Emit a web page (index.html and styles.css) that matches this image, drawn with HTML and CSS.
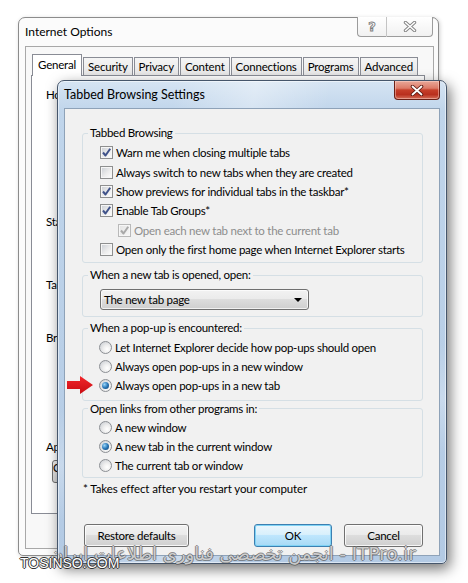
FILE: index.html
```html
<!DOCTYPE html>
<html lang="en">
<head>
    <meta charset="UTF-8">
    <meta name="viewport" content="width=device-width, initial-scale=1.0">
    <title>Tabbed Browsing Settings</title>
    <link rel="stylesheet" href="styles.css">
</head>
<body>
    <!-- Internet Options window, behind -->
    <div class="iewin">
        <div class="iewin-title">
            <span class="iewin-name">Internet Options</span>
            <div class="caption">
                <span class="cap-btn cap-help">?</span>
                <span class="cap-btn cap-close">
                    <svg width="14" height="11" viewBox="0 0 14 11">
                        <path d="M2.5 1.5 L11.5 9.5 M11.5 1.5 L2.5 9.5" stroke="#858585" stroke-width="3.4" stroke-linecap="round"/>
                        <path d="M2.5 1.5 L11.5 9.5 M11.5 1.5 L2.5 9.5" stroke="#fff" stroke-width="1.5" stroke-linecap="round"/>
                    </svg>
                </span>
            </div>
        </div>
        <div class="sheet">
            <div class="tabs">
                <span class="tab active">General</span>
                <span class="tab">Security</span>
                <span class="tab">Privacy</span>
                <span class="tab">Content</span>
                <span class="tab">Connections</span>
                <span class="tab">Programs</span>
                <span class="tab">Advanced</span>
            </div>
            <div class="tabpage">
                <div class="sec sec-home">Home page</div>
                <div class="sec sec-startup">Startup</div>
                <div class="sec sec-tabs">Tabs</div>
                <div class="sec sec-history">Browsing history</div>
                <div class="sec sec-look">Appearance</div>
                <span class="old-btn">Colors</span>
            </div>
        </div>
    </div>

    <!-- Tabbed Browsing Settings dialog, in front -->
    <div class="dlg">
        <div class="dlg-title">
            <span class="dlg-name">Tabbed Browsing Settings</span>
            <span class="dlg-close">
                <svg width="14" height="11" viewBox="0 0 14 11">
                    <path d="M2.5 1.5 L11.5 9.5 M11.5 1.5 L2.5 9.5" stroke="#5a1a12" stroke-width="3.6" stroke-linecap="round"/>
                    <path d="M2.5 1.5 L11.5 9.5 M11.5 1.5 L2.5 9.5" stroke="#fff" stroke-width="1.8" stroke-linecap="round"/>
                </svg>
            </span>
        </div>
        <div class="client">
            <fieldset class="group g-tabbed">
                <legend>Tabbed Browsing</legend>
                <label class="row"><span class="cb on"><svg viewBox="0 0 11 11"><path d="M2 5.5 L4.5 8.5 L9.2 1.8"/></svg></span>Warn me when closing multiple tabs</label>
                <label class="row"><span class="cb"></span>Always switch to new tabs when they are created</label>
                <label class="row"><span class="cb on"><svg viewBox="0 0 11 11"><path d="M2 5.5 L4.5 8.5 L9.2 1.8"/></svg></span>Show previews for individual tabs in the taskbar*</label>
                <label class="row"><span class="cb on"><svg viewBox="0 0 11 11"><path d="M2 5.5 L4.5 8.5 L9.2 1.8"/></svg></span>Enable Tab Groups*</label>
                <label class="row sub disabled"><span class="cb on"><svg viewBox="0 0 11 11"><path d="M2 5.5 L4.5 8.5 L9.2 1.8"/></svg></span>Open each new tab next to the current tab</label>
                <label class="row"><span class="cb"></span>Open only the first home page when Internet Explorer starts</label>
            </fieldset>

            <fieldset class="group g-newtab">
                <legend>When a new tab is opened, open:</legend>
                <div class="select">
                    <span>The new tab page</span>
                    <span class="caret"></span>
                </div>
            </fieldset>

            <fieldset class="group g-popup">
                <legend>When a pop-up is encountered:</legend>
                <label class="row"><span class="rb"></span>Let Internet Explorer decide how pop-ups should open</label>
                <label class="row"><span class="rb"></span>Always open pop-ups in a new window</label>
                <label class="row"><span class="rb on"></span>Always open pop-ups in a new tab</label>
            </fieldset>

            <fieldset class="group g-links">
                <legend>Open links from other programs in:</legend>
                <label class="row"><span class="rb"></span>A new window</label>
                <label class="row"><span class="rb on"></span>A new tab in the current window</label>
                <label class="row"><span class="rb"></span>The current tab or window</label>
            </fieldset>

            <p class="note">* Takes effect after you restart your computer</p>

            <div class="buttons">
                <button class="btn btn-restore">Restore defaults</button>
                <span class="spacer"></span>
                <button class="btn btn-ok">OK</button>
                <button class="btn btn-cancel">Cancel</button>
            </div>
        </div>
    </div>

    <!-- annotation arrow -->
    <svg class="arrow" width="27" height="20" viewBox="0 0 27 20">
        <defs>
            <linearGradient id="arrowFill" x1="0" y1="0" x2="0" y2="1">
                <stop offset="0" stop-color="#f2262b"/>
                <stop offset="1" stop-color="#c80c12"/>
            </linearGradient>
        </defs>
        <polygon points="0,6 13,6 13,1 26,10 13,19 13,14 0,14" fill="url(#arrowFill)"/>
    </svg>

    <!-- watermarks -->
    <div class="wm-persian">انجمن تخصصی فناوری اطلاعات ایران - ITPro.ir</div>
    <div class="wm-site">TOSINSO.COM</div>
</body>
</html>
```

FILE: styles.css
```css
* { box-sizing: border-box; }
body { margin: 0; width: 468px; height: 583px; overflow: hidden; position: relative; background: #fff; font-family: "Lato", "Segoe UI", sans-serif; font-size: 11.5px; letter-spacing: -0.25px; color: #000; }

/* back window */
.iewin { margin: 17px 0 0 18px; width: 421px; height: 539px; border: 1px solid #8c8c8c; border-radius: 7px 7px 5px 5px; background: #fbfbfb; box-shadow: 1px 1px 4px rgba(0,0,0,0.18); display: flex; flex-direction: column; }
.iewin-title { height: 28px; flex: none; display: flex; justify-content: space-between; align-items: flex-start; padding: 0 5px 0 6px; }
.iewin-name { padding-top: 7px; line-height: 14px; font-size: 12px; letter-spacing: 0; }
.caption { display: flex; margin-top: -1px; }
.cap-btn { height: 20px; border: 1px solid #9c9c9c; border-top: none; background: linear-gradient(#ffffff, #f1f1f1); display: flex; align-items: center; justify-content: center; }
.cap-help { width: 29px; border-right: none; border-radius: 0 0 0 4px; font-family: "DejaVu Sans", sans-serif; font-size: 13px; color: #fff; -webkit-text-stroke: 0.9px #7d7d7d; font-weight: bold; }
.cap-close { width: 47px; border-left: 1px solid #c4c4c4; border-radius: 0 0 4px 0; }

.sheet { flex: 1; margin: 0 4px 6px 6px; border: 1px solid #a8a8a8; background: #f8f8f8; padding: 7px 8px 0 5px; }
.tabs { display: flex; align-items: flex-end; height: 21px; margin-left: 1px; gap: 1px; }
.tab { height: 18px; padding: 0 4px; border: 1px solid #898c95; border-bottom: none; background: linear-gradient(#f5f5f5, #e6e6e6); line-height: 17px; white-space: nowrap; letter-spacing: -0.2px; }
.tab.active { height: 22px; margin-bottom: -1px; background: #fff; position: relative; line-height: 19px; padding: 0 5px; }
.tabpage { height: 439px; border: 1px solid #898c95; background: #fff; padding: 12px 0 0 14px; }
.sec { line-height: 14px; }
.sec-home { height: 127px; }
.sec-startup { height: 63px; }
.sec-tabs { height: 53px; }
.sec-history { height: 109px; }
.sec-look { height: 20px; }
.old-btn { display: inline-block; margin-left: 6px; width: 70px; height: 23px; border: 1px solid #707070; border-radius: 3px; background: linear-gradient(#f2f2f2, #d8d8d8); }

/* front dialog */
.dlg { position: absolute; left: 57px; top: 80px; width: 390px; height: 484px; border: 1px solid #46566b; border-radius: 7px 7px 5px 5px; padding: 0 6px 7px; display: flex; flex-direction: column;
    background:
        linear-gradient(100deg, rgba(255,255,255,0) 25%, rgba(255,255,255,0.35) 42%, rgba(255,255,255,0) 58%),
        linear-gradient(170deg, rgba(255,255,255,0) 60%, rgba(255,255,255,0.25) 70%, rgba(255,255,255,0) 80%),
        linear-gradient(#d6e4f3, #c0d5eb 30px, #b3cae4);
    box-shadow: 3px 5px 14px rgba(0,0,0,0.55), inset 0 0 0 1px rgba(255,255,255,0.5); }
.dlg-title { height: 27px; flex: none; display: flex; justify-content: space-between; align-items: flex-start; }
.dlg-name { margin-top: 5px; line-height: 18px; font-size: 12.5px; letter-spacing: 0; color: #000; }
.dlg-close { width: 46px; height: 19px; border: 1px solid #6b2016; border-top: none; border-radius: 0 0 4px 4px; display: flex; align-items: center; justify-content: center;
    background: linear-gradient(#e9a899 0, #dd7b68 40%, #c63f2a 50%, #b9301e 75%, #d46d58 100%); box-shadow: inset 0 0 0 1px rgba(255,220,210,0.45); }

.client { flex: 1; border: 1px solid #8ea2b8; background: #f1f1f1; padding: 17px 16px 8px 17px; display: flex; flex-direction: column; }

.group { margin: 0; min-width: 0; border: 1px solid #d5dfe5; border-radius: 3px; padding: 3px 0 3px 17px; }
.group legend { padding: 0 2px; margin-left: -12px; line-height: 14px; }
.g-newtab { margin-top: 5px; padding-top: 7px; padding-bottom: 6px; }
.g-popup { margin-top: 4px; padding-top: 2px; padding-bottom: 4px; padding-left: 16px; }
.g-popup legend { margin-left: -11px; }
.g-links { margin-top: 1px; padding-top: 2px; padding-bottom: 1px; padding-left: 16px; }
.g-links legend { margin-left: -11px; }

.row { display: flex; align-items: center; height: 19.4px; white-space: nowrap; }
.row.sub { padding-left: 18px; }
.row.disabled { color: #8d8d8d; }

.cb { width: 13px; height: 13px; flex: none; margin-right: 3px; border: 1px solid #8e8f8f; box-shadow: inset 0 0 0 1px #f6f6f6; background: linear-gradient(135deg, #c9cdd3 0%, #ececec 55%, #ffffff 100%); display: flex; align-items: center; justify-content: center; }
.cb svg { width: 11px; height: 11px; }
.cb path { fill: none; stroke: #40538a; stroke-width: 2; stroke-linejoin: round; }
.disabled .cb { border-color: #b9b9b9; background: linear-gradient(135deg, #e3e3e3, #f7f7f7); }
.disabled .cb path { stroke: #a9a9a9; }

.rb { width: 13px; height: 13px; flex: none; margin-right: 3px; border-radius: 50%; border: 1px solid #8c8f94; background: radial-gradient(circle at 65% 65%, #ffffff 0, #f0f0f0 35%, #c4c8ce 100%); display: flex; align-items: center; justify-content: center; }
.rb.on::after { content: ""; width: 7px; height: 7px; border-radius: 50%; background: radial-gradient(circle at 35% 35%, #9ad6fa 0, #2a78b8 50%, #0d3866 100%); }

.select { width: 209px; height: 21px; border: 1px solid #707070; border-radius: 3px; background: linear-gradient(#f2f2f2 0, #ebebeb 45%, #dddddd 50%, #cfcfcf 100%); box-shadow: inset 0 0 0 1px rgba(255,255,255,0.7); display: flex; align-items: center; justify-content: space-between; padding: 0 6px 0 3px; }
.caret { width: 0; height: 0; border-left: 4px solid transparent; border-right: 4px solid transparent; border-top: 4px solid #000; }

.note { margin: 4px 0 0 1px; line-height: 14px; letter-spacing: -0.1px; }

.buttons { margin-top: auto; display: flex; gap: 12px; padding-left: 2px; }
.spacer { flex: 1; }
.btn { height: 23px; padding: 0; font: inherit; letter-spacing: inherit; color: #000; border: 1px solid #707070; border-radius: 3px; background: linear-gradient(#f2f2f2 0, #ebebeb 45%, #dddddd 50%, #cfcfcf 100%); box-shadow: inset 0 0 0 1px rgba(255,255,255,0.8); }
.btn-restore { width: 105px; }
.btn-ok { width: 78px; border-color: #3c7fb1; background: linear-gradient(#eaf6fd 0, #d9f0fc 45%, #bee6fd 50%, #a7d9f5 100%); box-shadow: inset 0 0 0 1px #7fd3f5; }
.btn-cancel { width: 79px; }

/* overlays */
.arrow { position: absolute; left: 67px; top: 375px; }
.wm-persian { position: absolute; left: 50px; top: 543px; font-family: "DejaVu Sans", sans-serif; font-size: 18px; line-height: 22px; letter-spacing: 0.2px; white-space: nowrap; color: rgba(255,255,255,0.7); text-shadow: 1px 0 0 rgba(80,80,80,0.6), -1px 0 0 rgba(80,80,80,0.6), 0 1px 0 rgba(80,80,80,0.6), 0 -1px 0 rgba(80,80,80,0.6); }
.wm-site { position: absolute; left: 20px; top: 555px; font-family: "Liberation Sans", sans-serif; font-size: 14px; line-height: 16px; letter-spacing: 0; color: #fff; text-shadow: 1px 0 0 #333, -1px 0 0 #333, 0 1px 0 #333, 0 -1px 0 #333; }
```
